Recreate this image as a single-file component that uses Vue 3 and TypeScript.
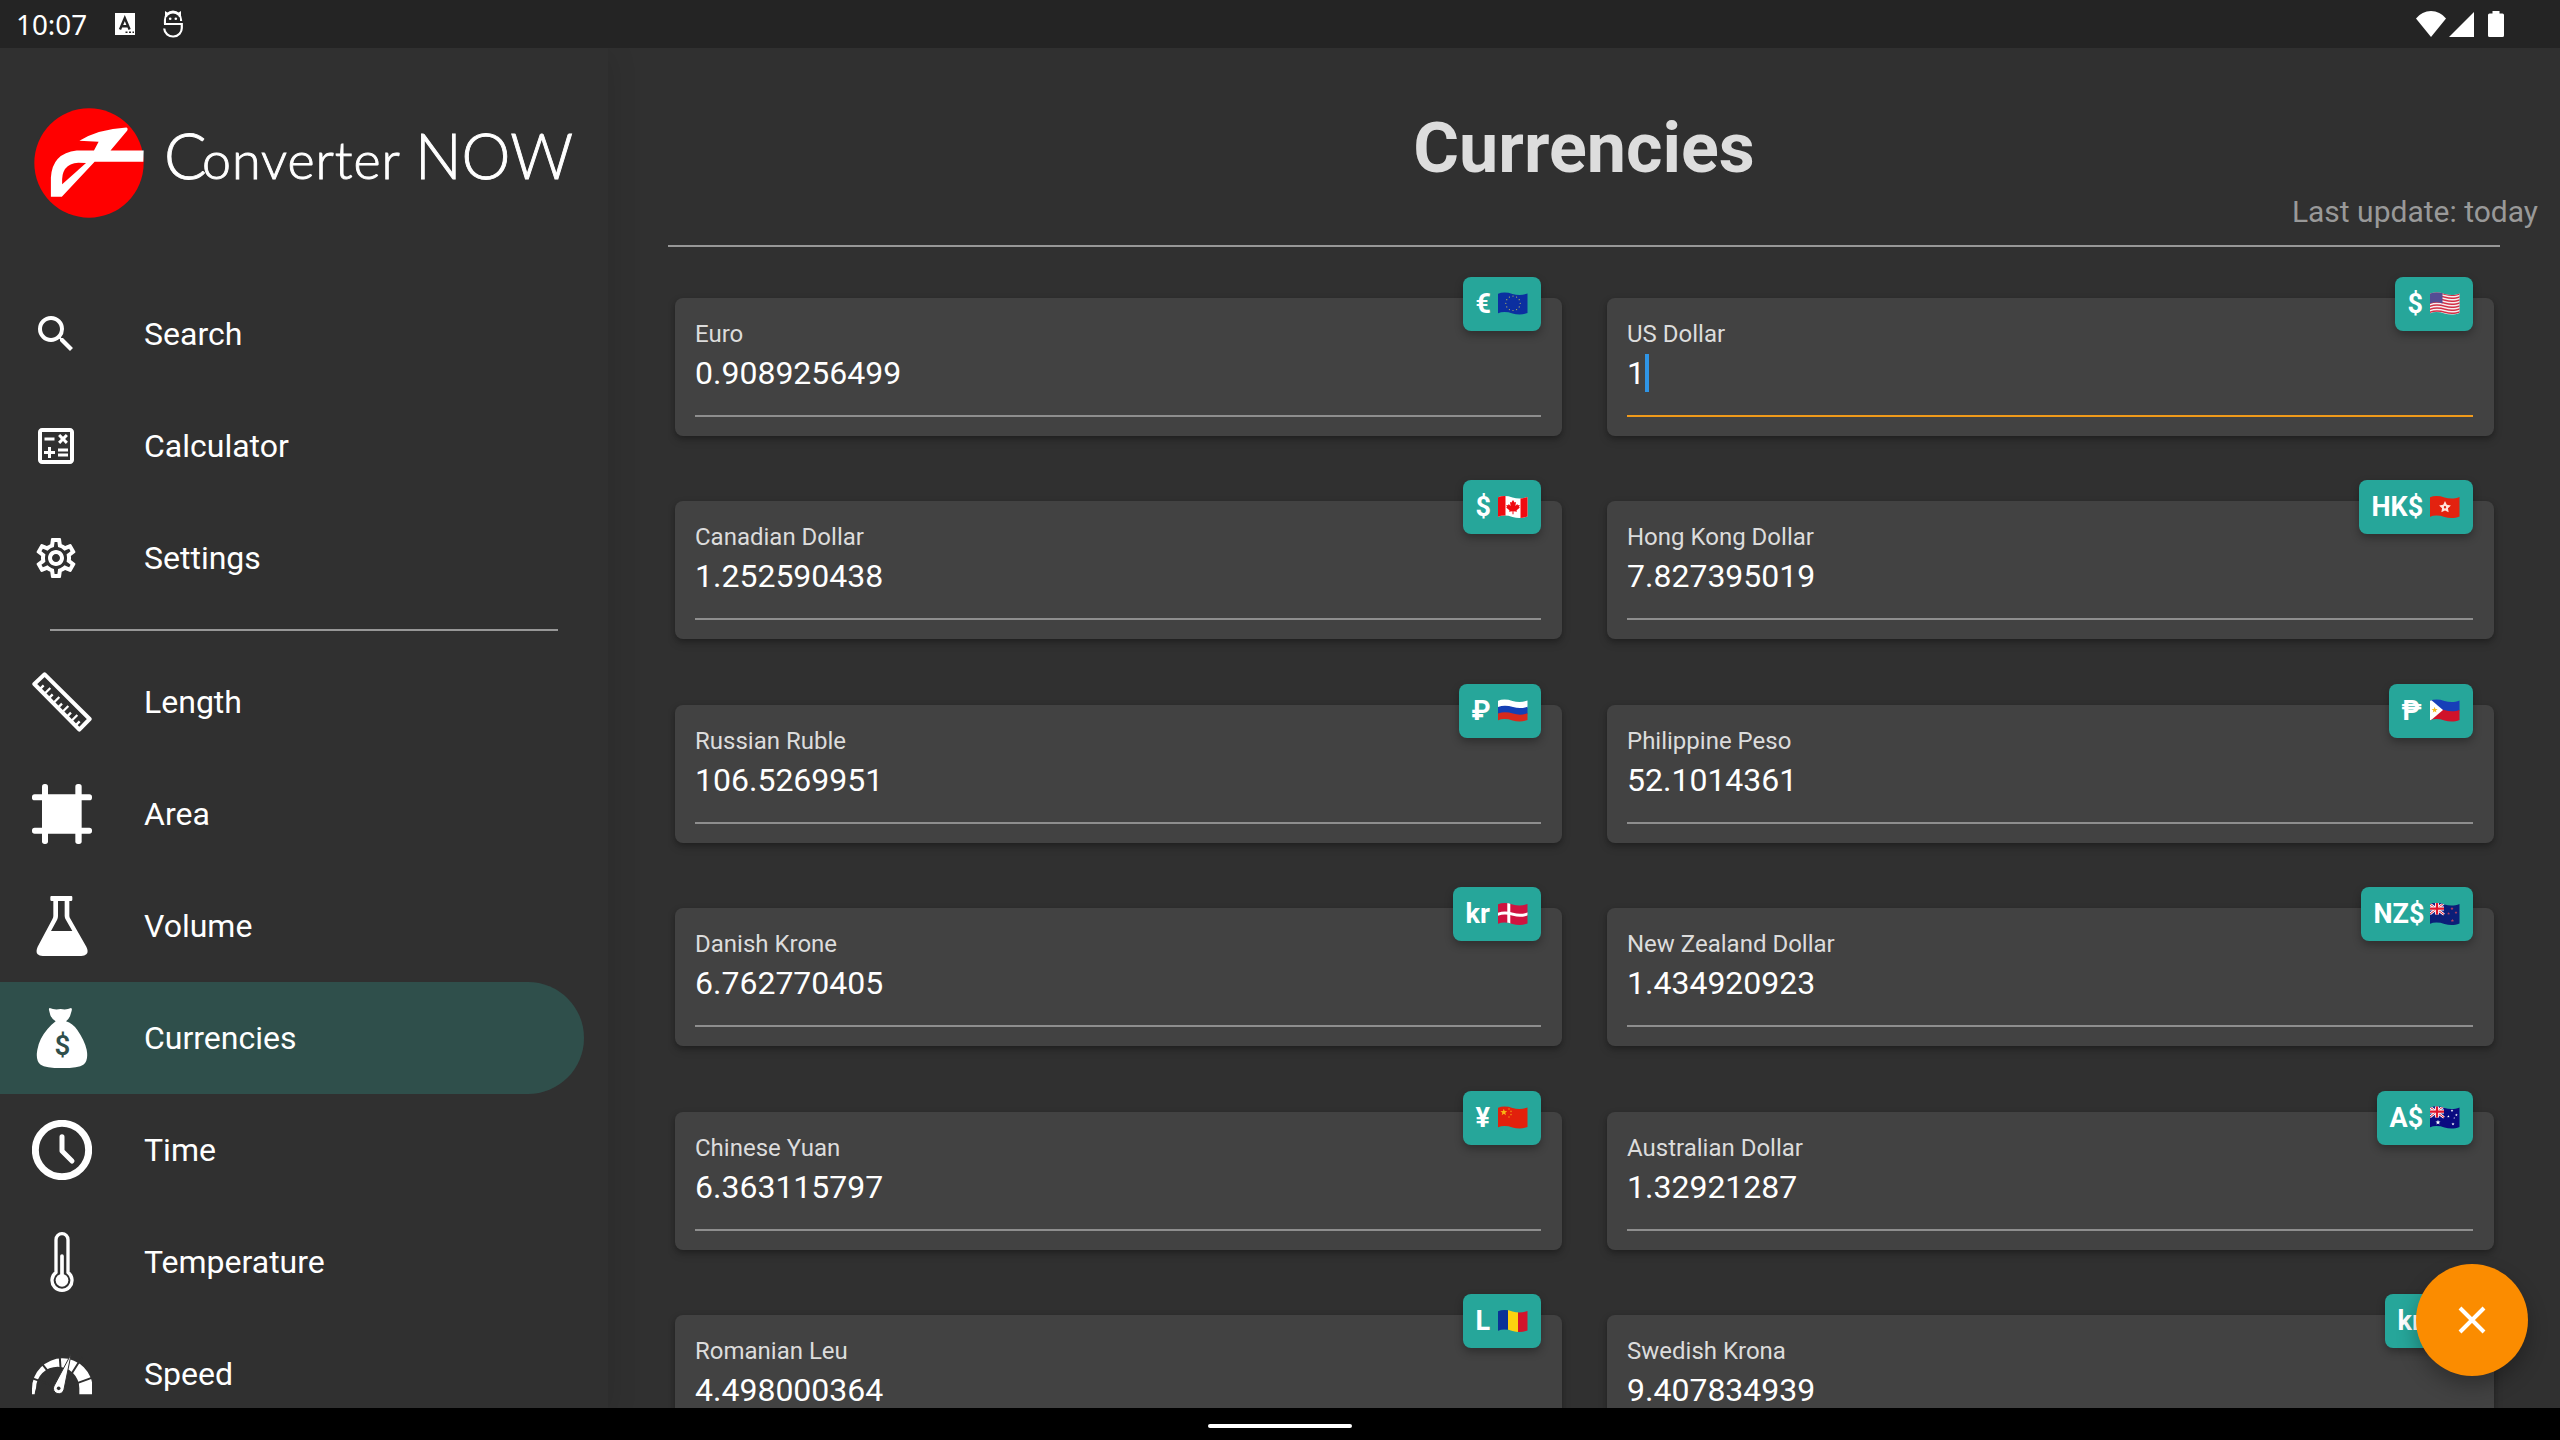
<script setup lang="ts">
type Shape = { d: string; fill?: string; stroke?: string; w?: number }

interface Currency {
  name: string
  value: string
  symbol: string
  flag: string
  tagWidth: number
  focused?: boolean
}

interface NavItem {
  label: string
  icon: string
  box: string
  selected?: boolean
}

// Horizontal strip of a waving flag between two heights.
const band = (a: number, b: number): string =>
  `M0 ${a}C5 ${a - 2} 10 ${a - 1.5} 15 ${a}C20 ${a + 1.5} 25 ${a + 1.5} 30 ${a - 0.5}V${b - 0.5}` +
  `C25 ${b + 1.5} 20 ${b + 1.5} 15 ${b}C10 ${b - 1.5} 5 ${b - 2} 0 ${b}Z`

const star = (cx: number, cy: number, r: number, inner = 0.42): string => {
  let d = ''
  for (let i = 0; i < 10; i++) {
    const q = i % 2 ? r * inner : r
    const t = -Math.PI / 2 + (i * Math.PI) / 5
    d += `${i ? 'L' : 'M'}${(cx + q * Math.cos(t)).toFixed(2)} ${(cy + q * Math.sin(t)).toFixed(2)}`
  }
  return d + 'Z'
}

const dot = (cx: number, cy: number, r: number): string =>
  `M${cx - r} ${cy}a${r} ${r} 0 1 0 ${2 * r} 0a${r} ${r} 0 1 0 ${-2 * r} 0`

const ring = (): string => {
  let d = ''
  for (let i = 0; i < 12; i++) {
    const t = (i * Math.PI) / 6
    d += dot(15 + 7.2 * Math.cos(t), 11.3 + 7.2 * Math.sin(t), 0.6)
  }
  return d
}

const unionJack: Shape[] = [
  { d: 'M0 0H14V11.5H0Z', fill: '#1b1f8a' },
  { d: 'M0 1L14 11.5M14 0L0 11', stroke: '#fff', w: 2.6 },
  { d: 'M0 1L14 11.5M14 0L0 11', stroke: '#e0142c', w: 1 },
  { d: 'M7 0V11.5M0 5.6H14', stroke: '#fff', w: 4 },
  { d: 'M7 0V11.5M0 5.6H14', stroke: '#e0142c', w: 2.3 },
]

const usStripes: Shape[] = [0, 1, 2, 3, 4, 5, 6].map((i) => ({
  d: band(1.5 + i * 3, 3 + i * 3),
  fill: '#d32f45',
}))

const flags: Record<string, Shape[]> = {
  eu: [
    { d: band(-1, 24), fill: '#0b2fa0' },
    { d: ring(), fill: '#b9b45c' },
  ],
  us: [
    { d: band(-1, 24), fill: '#f6eef0' },
    ...usStripes,
    { d: 'M0 0H12.5V11.5Q6 9 0 11.5Z', fill: '#544d94' },
  ],
  ca: [
    { d: band(-1, 24), fill: '#fff' },
    { d: 'M0 0H7.5V24H0ZM22.5 0H30V24H22.5Z', fill: '#f00a10' },
    {
      d: 'M15 4l1.6 2.6 1.4-.7-.6 4 1.9-1.9.5 1.2 2-.3-.8 2.1.9.6-3.3 2.7.3 1.4-3.4-.5v3h-1v-3l-3.4.5.3-1.4-3.3-2.7.9-.6-.8-2.1 2 .3.5-1.2 1.9 1.9-.6-4 1.4.7Z',
      fill: '#f00a10',
    },
  ],
  hk: [
    { d: band(-1, 24), fill: '#e3220f' },
    { d: star(15, 11.3, 6.2, 0.5), fill: '#ffe2dc' },
    { d: dot(15, 11.3, 1.2), fill: '#e3220f' },
  ],
  ru: [
    { d: band(-1, 9), fill: '#fff' },
    { d: band(8, 15.5), fill: '#1540b5' },
    { d: band(14.6, 24), fill: '#d8291c' },
  ],
  ph: [
    { d: band(-1, 12), fill: '#173fb8' },
    { d: band(11.3, 24), fill: '#d0122a' },
    { d: 'M0 0L13 11L0 22Z', fill: '#fff' },
    { d: star(4.6, 11, 3.2), fill: '#f5b921' },
  ],
  dk: [
    { d: band(-1, 24), fill: '#cf1340' },
    { d: band(9.8, 12.8), fill: '#fff' },
    { d: 'M9.3 0H12.3V24H9.3Z', fill: '#fff' },
  ],
  nz: [
    { d: band(-1, 24), fill: '#0b1f78' },
    ...unionJack,
    {
      d: star(22, 5.5, 1.7) + star(26, 9.5, 1.5) + star(18.6, 10.6, 1.5) + star(22.4, 17.5, 1.8),
      fill: '#b8405f',
    },
  ],
  cn: [
    { d: band(-1, 24), fill: '#e2200c' },
    { d: star(5.8, 6.3, 3.6), fill: '#f9b614' },
    { d: dot(11, 3, 0.8) + dot(13, 5.4, 0.8) + dot(13, 8.6, 0.8) + dot(11, 11, 0.8), fill: '#f08a12' },
  ],
  au: [
    { d: band(-1, 24), fill: '#0a0a80' },
    ...unionJack,
    {
      d:
        star(8, 16.3, 2.6) + star(22, 4.6, 1.4) + star(26.4, 9, 1.4) + star(18.4, 10.4, 1.4) +
        star(23, 18, 1.6) + star(24.2, 12, 0.9),
      fill: '#fff',
    },
  ],
  ro: [
    { d: 'M0 0H10V24H0Z', fill: '#0a3296' },
    { d: 'M10 0H20V24H10Z', fill: '#fcd30f' },
    { d: 'M20 0H30V24H20Z', fill: '#d3142b' },
  ],
  se: [
    { d: band(-1, 24), fill: '#0b5aa8' },
    { d: band(9.8, 12.8), fill: '#fccb05' },
    { d: 'M9.3 0H12.3V24H9.3Z', fill: '#fccb05' },
  ],
}

const currencies: Currency[] = [
  { name: 'Euro', value: '0.9089256499', symbol: '€', flag: 'eu', tagWidth: 78 },
  { name: 'US Dollar', value: '1', symbol: '$', flag: 'us', tagWidth: 78, focused: true },
  { name: 'Canadian Dollar', value: '1.252590438', symbol: '$', flag: 'ca', tagWidth: 78 },
  { name: 'Hong Kong Dollar', value: '7.827395019', symbol: 'HK$', flag: 'hk', tagWidth: 114 },
  { name: 'Russian Ruble', value: '106.5269951', symbol: '₽', flag: 'ru', tagWidth: 82 },
  { name: 'Philippine Peso', value: '52.1014361', symbol: '₱', flag: 'ph', tagWidth: 84 },
  { name: 'Danish Krone', value: '6.762770405', symbol: 'kr', flag: 'dk', tagWidth: 88 },
  { name: 'New Zealand Dollar', value: '1.434920923', symbol: 'NZ$', flag: 'nz', tagWidth: 112 },
  { name: 'Chinese Yuan', value: '6.363115797', symbol: '¥', flag: 'cn', tagWidth: 78 },
  { name: 'Australian Dollar', value: '1.32921287', symbol: 'A$', flag: 'au', tagWidth: 96 },
  { name: 'Romanian Leu', value: '4.498000364', symbol: 'L', flag: 'ro', tagWidth: 78 },
  { name: 'Swedish Krona', value: '9.407834939', symbol: 'kr', flag: 'se', tagWidth: 88 },
]

const m = '0 0 24 24'
const actions: NavItem[] = [
  {
    label: 'Search',
    box: m,
    icon: '<path d="M15.5 14h-.79l-.28-.27A6.471 6.471 0 0 0 16 9.5 6.5 6.5 0 1 0 9.5 16c1.61 0 3.09-.59 4.23-1.57l.27.28v.79l5 4.99L20.49 19l-4.99-5zm-6 0C7.01 14 5 11.99 5 9.5S7.01 5 9.5 5 14 7.01 14 9.5 11.99 14 9.5 14z"/>',
  },
  {
    label: 'Calculator',
    box: m,
    icon: '<path d="M19 3H5c-1.1 0-2 .9-2 2v14c0 1.1.9 2 2 2h14c1.1 0 2-.9 2-2V5c0-1.1-.9-2-2-2zm0 16H5V5h14v14z"/><path d="M6.25 7.72h5v1.5h-5zM13 15.75h5v1.5h-5zM13 13.25h5v1.5h-5zM8 18h1.5v-2h2v-1.5h-2v-2H8v2H6V16h2zM14.09 10.95l1.41-1.41 1.41 1.41 1.06-1.06-1.41-1.42 1.41-1.41L16.91 6 15.5 7.41 14.09 6l-1.06 1.06 1.41 1.41-1.41 1.42z"/>',
  },
  {
    label: 'Settings',
    box: m,
    icon: '<path d="M19.43 12.98c.04-.32.07-.64.07-.98 0-.34-.03-.66-.07-.98l2.11-1.65c.19-.15.24-.42.12-.64l-2-3.46c-.09-.16-.26-.25-.44-.25-.06 0-.12.01-.17.03l-2.49 1c-.52-.4-1.08-.73-1.69-.98l-.38-2.65C14.46 2.18 14.25 2 14 2h-4c-.25 0-.46.18-.49.42l-.38 2.65c-.61.25-1.17.59-1.69.98l-2.49-1c-.06-.02-.12-.03-.18-.03-.17 0-.34.09-.43.25l-2 3.46c-.13.22-.07.49.12.64l2.11 1.65c-.04.32-.07.65-.07.98 0 .33.03.66.07.98l-2.11 1.65c-.19.15-.24.42-.12.64l2 3.46c.09.16.26.25.44.25.06 0 .12-.01.17-.03l2.49-1c.52.4 1.08.73 1.69.98l.38 2.65c.03.24.24.42.49.42h4c.25 0 .46-.18.49-.42l.38-2.65c.61-.25 1.17-.59 1.69-.98l2.49 1c.06.02.12.03.18.03.17 0 .34-.09.43-.25l2-3.46c.12-.22.07-.49-.12-.64l-2.11-1.65zm-1.98-1.71c.04.31.05.52.05.73 0 .21-.02.43-.05.73l-.14 1.13.89.7 1.08.84-.7 1.21-1.27-.51-1.04-.42-.9.68c-.43.32-.84.56-1.25.73l-1.06.43-.16 1.13-.2 1.35h-1.4l-.19-1.35-.16-1.13-1.06-.43c-.43-.18-.83-.41-1.23-.71l-.91-.7-1.06.43-1.27.51-.7-1.21 1.08-.84.89-.7-.14-1.13c-.03-.31-.05-.54-.05-.74s.02-.43.05-.73l.14-1.13-.89-.7-1.08-.84.7-1.21 1.27.51 1.04.42.9-.68c.43-.32.84-.56 1.25-.73l1.06-.43.16-1.13.2-1.35h1.39l.19 1.35.16 1.13 1.06.43c.43.18.83.41 1.23.71l.91.7 1.06-.43 1.27-.51.7 1.21-1.07.85-.89.7.14 1.13zM12 8c-2.21 0-4 1.79-4 4s1.79 4 4 4 4-1.79 4-4-1.79-4-4-4zm0 6c-1.1 0-2-.9-2-2s.9-2 2-2 2 .9 2 2-.9 2-2 2z"/>',
  },
]

const u = '0 0 180 180'
const units: NavItem[] = [
  {
    label: 'Length',
    box: u,
    icon: '<path d="M7 36L38 7L173 141L142 173Z" fill="none" stroke="currentColor" stroke-width="12" stroke-linejoin="round"/><path d="M23 52l12-12M37 66l18-18M50 79l12-12M64 93l18-18M78 107l12-12M91 120l18-18M105 134l12-12M118 147l18-18M131 160l12-12" fill="none" stroke="currentColor" stroke-width="7"/>',
  },
  {
    label: 'Area',
    box: u,
    icon: '<rect x="30" y="0" width="18" height="180" rx="8"/><rect x="130" y="0" width="19" height="180" rx="8"/><rect x="0" y="31" width="180" height="18" rx="8"/><rect x="0" y="131" width="180" height="18" rx="8"/><rect x="34" y="34" width="112" height="112"/>',
  },
  {
    label: 'Volume',
    box: u,
    icon: '<path fill-rule="evenodd" d="M58 0H118Q121 0 121 4V11Q121 15 117 15H112V60Q112 64 116 70L163 152Q171 168 163 175Q158 180 148 180H32Q22 180 17 175Q10 168 17 152L61 70Q64 64 64 60V15H59Q55 15 55 11V4Q55 0 58 0ZM78 15V60Q78 66 75 72L57 105H121L102 72Q98 66 98 60V15Z"/>',
  },
  {
    label: 'Currencies',
    box: u,
    selected: true,
    icon: '<path d="M53 0Q68 7 86 3Q103 7 117 0Q121 1 119 8L114 25Q110 34 102 40Q122 46 136 66Q158 98 164 125Q170 158 154 170Q140 180 90 180Q40 180 26 170Q10 158 16 125Q22 92 46 64Q60 48 71 40Q60 33 55 22L51 6Q50 1 53 0Z"/><text x="91" y="141" text-anchor="middle" font-family="Roboto, sans-serif" font-size="83" font-weight="600" fill="#2f4f4b">$</text>',
  },
  {
    label: 'Time',
    box: u,
    icon: '<circle cx="90" cy="90" r="80" fill="none" stroke="currentColor" stroke-width="21"/><path d="M90 50V93L120 123" fill="none" stroke="currentColor" stroke-width="15" stroke-linecap="round" stroke-linejoin="round"/>',
  },
  {
    label: 'Temperature',
    box: u,
    icon: '<path d="M72 121V23a18 18 0 0 1 36 0V121a30 30 0 1 1-36 0Z" fill="none" stroke="currentColor" stroke-width="10"/><path d="M90 72V140" stroke="currentColor" stroke-width="11" stroke-linecap="round"/><circle cx="90" cy="145" r="19"/>',
  },
  {
    label: 'Speed',
    box: u,
    icon: '<path fill-rule="evenodd" d="M0 151V134A91 91 0 0 1 182 134V151H142V133A65 65 0 0 0 12 133Q9 140 8 151Z"/><path d="M90 134L-8 100M90 134L24 52M90 134L82 20M90 134L150 40M90 134L195 96" stroke="#303030" stroke-width="6"/><path d="M117.500 30L96 136A16 16 0 1 1 66 126Z" stroke="#303030" stroke-width="3"/><circle cx="80" cy="133" r="5.500" fill="#303030"/>',
  },
]
</script>

<template>
  <div class="screen">
    <header class="status">
      <span class="clock">10:07</span>
      <svg class="st-a" viewBox="0 0 20 22"><path d="M0 0H20V22H0Z" fill="#fff" /><path d="M5 16.500L9.800 5L14.600 16.500M6.500 13.200H13" fill="none" stroke="#242424" stroke-width="2.400" /><path d="M10.500 19.300h2M14 19.300h2M17.500 19.300h1.500" stroke="#242424" stroke-width="1.500" /></svg>
      <svg class="st-s" viewBox="0 0 20 29"><path d="M2 8V2L5.500 4.200Q10 1.500 14.500 4.200L18 2V8" fill="#fff" /><path d="M2 15V11A8 8.500 0 0 1 18 11V12M1 15H18.800V18.500A8.800 8.500 0 0 1 1.200 19.500" fill="none" stroke="#fff" stroke-width="2.200" /><path d="M3 14V11A7 6.500 0 0 1 17 11V14Z" fill="#242424" /><circle cx="7.200" cy="9.800" r="1.300" fill="#fff" /><circle cx="12.800" cy="9.800" r="1.300" fill="#fff" /></svg>
      <span class="grow" />
      <svg class="st-wifi" viewBox="0 0 30 26"><path d="M0 7.500Q6 0 15 0T30 7.500L15 26Z" fill="#fff" /></svg>
      <svg class="st-cell" viewBox="0 0 25 25"><path d="M0 25L25 0V25Z" fill="#fff" /></svg>
      <svg class="st-bat" viewBox="0 0 16 26"><path d="M4.500 0H11.500V2.500H14.500Q16 2.500 16 4V24.500Q16 26 14.500 26H1.500Q0 26 0 24.500V4Q0 2.500 1.500 2.500H4.500Z" fill="#fff" /></svg>
    </header>

    <div class="body">
      <aside class="drawer">
        <div class="brand">
          <svg class="logo" viewBox="72 322 330 332">
            <circle cx="237" cy="488" r="165" fill="#f00" />
            <path d="M208 421Q265 386 350 381Q356 384 352 391L302 450H402L401 484H254L155 590H122V532Q126 458 200 450H252L266 424Z" fill="#fff" />
            <path d="M228 488L156 552Q151 490 205 487Z" fill="#f00" />
          </svg>
          <svg class="wordmark" viewBox="0 0 420 80">
            <text y="59"><tspan class="cap" x="0" textLength="38">C</tspan><tspan class="low" x="38" textLength="198">onverter</tspan><tspan class="cap" x="251" textLength="158" lengthAdjust="spacingAndGlyphs">NOW</tspan></text>
          </svg>
        </div>
        <nav>
          <div v-for="a in actions" :key="a.label" class="item">
            <span class="slot"><svg class="ic small" :viewBox="a.box" v-html="a.icon" /></span>
            <span>{{ a.label }}</span>
          </div>
          <div class="rule" />
          <div v-for="n in units" :key="n.label" class="item" :class="{ selected: n.selected }">
            <span class="slot"><svg class="ic" :viewBox="n.box" v-html="n.icon" /></span>
            <span>{{ n.label }}</span>
          </div>
        </nav>
      </aside>

      <main>
        <h1>Currencies</h1>
        <p class="update">Last update: today</p>
        <div class="line" />
        <section class="grid">
          <article v-for="c in currencies" :key="c.name" class="card" :class="{ focused: c.focused }">
            <div class="label">{{ c.name }}</div>
            <div class="value">{{ c.value }}<i v-if="c.focused" class="caret" /></div>
            <div class="tag" :style="{ width: c.tagWidth + 'px' }">
              <span>{{ c.symbol }}</span>
              <svg class="flag" viewBox="0 0 30 23">
                <path
                  v-for="(s, i) in flags[c.flag]"
                  :key="i"
                  :d="s.d"
                  :fill="s.fill ?? 'none'"
                  :stroke="s.stroke"
                  :stroke-width="s.w"
                />
              </svg>
            </div>
          </article>
        </section>
      </main>
    </div>

    <button class="fab" aria-label="Clear">
      <svg viewBox="0 0 28 28"><path d="M2 2L26 26M26 2L2 26" stroke="#fff" stroke-width="4" /></svg>
    </button>

    <footer><span class="handle" /></footer>
  </div>
</template>

<style>
body {
  margin: 0;
  background: #303030;
}
</style>

<style scoped>
.screen {
  position: relative;
  display: flex;
  flex-direction: column;
  width: 2560px;
  height: 1440px;
  overflow: hidden;
  background: #303030;
  color: #fff;
  font-family: Roboto, sans-serif;
}
.status {
  display: flex;
  align-items: flex-start;
  flex: none;
  height: 48px;
  background: #242424;
  position: relative;
  z-index: 2;
}
.clock {
  width: 99px;
  padding-left: 16px;
  font: 27.8px/49px "Noto Sans", sans-serif;
}
.st-a { width: 20px; height: 22px; margin-top: 13px; }
.st-s { width: 20px; height: 29px; margin: 9px 0 0 28px; }
.grow { flex: 1; }
.st-wifi { width: 30px; height: 26px; margin-top: 11px; }
.st-cell { width: 25px; height: 25px; margin: 12px 14px 0 3px; }
.st-bat { width: 16px; height: 26px; margin: 11px 56px 0 0; }
.body {
  display: flex;
  flex: 1;
  min-height: 0;
}
.drawer {
  flex: none;
  width: 608px;
  background: #303030;
  box-shadow: 0 6px 28px rgba(0, 0, 0, 0.13);
}
.brand {
  display: flex;
  align-items: flex-start;
  height: 170px;
  padding: 60px 0 0 34px;
}
.logo { flex: none; width: 110px; height: 110px; }
.wordmark {
  width: 420px;
  height: 80px;
  margin: 12px 0 0 20px;
  overflow: visible;
  fill: #fff;
  stroke: #fff;
  stroke-width: 0.9px;
  font-family: Lato, sans-serif;
  font-weight: 300;
}
.cap { font-size: 63px; }
.low { font-size: 52px; }
.item {
  display: flex;
  align-items: center;
  width: 584px;
  height: 112px;
  font-size: 32px;
  line-height: 38px;
}
.item.selected {
  background: #2f4f4b;
  border-radius: 0 56px 56px 0;
}
.slot {
  display: flex;
  flex: none;
  width: 112px;
  padding-left: 32px;
}
.ic { width: 60px; height: 60px; fill: currentColor; }
.ic.small { width: 48px; height: 48px; }
.rule {
  width: 508px;
  height: 2px;
  margin: 15px 50px;
  background: #979797;
}
main {
  flex: 1;
  min-width: 0;
  overflow: hidden;
  margin-left: 60px;
  padding-right: 60px;
}
h1 {
  margin: 59px 0 0;
  color: #ddd;
  font-size: 70px;
  font-weight: 700;
  line-height: 82px;
  text-align: center;
}
.update {
  margin: 4px -38px 0 0;
  color: #999;
  font-size: 30px;
  line-height: 38px;
  text-align: right;
}
.line {
  height: 2px;
  margin-top: 14px;
  background: #979797;
}
.grid {
  display: grid;
  grid-template-columns: 1fr 1fr;
  grid-auto-rows: 138px;
  gap: 65.5px 45px;
  padding: 50.9px 6.5px 0;
}
.card {
  position: relative;
  box-sizing: border-box;
  padding: 22px 20.5px 0;
  border-radius: 8px;
  background: #424242;
  box-shadow: 0 4px 8px rgba(0, 0, 0, 0.22), 0 2px 4px rgba(0, 0, 0, 0.15);
}
.label {
  color: #dcdcdc;
  font-size: 24px;
  line-height: 28px;
}
.value {
  display: flex;
  height: 61px;
  margin-top: 6px;
  border-bottom: 2px solid #8e8e8e;
  font-size: 32px;
  line-height: 38px;
}
.focused .value { border-color: #f09a1a; }
.caret {
  width: 4px;
  height: 38px;
  background: #2f95e6;
}
.tag {
  position: absolute;
  top: -21px;
  right: 20.5px;
  display: flex;
  align-items: center;
  justify-content: space-between;
  box-sizing: border-box;
  height: 54px;
  padding: 0 13.5px 0 12.5px;
  border-radius: 8px;
  background: #26a69a;
  box-shadow: 0 4px 8px rgba(0, 0, 0, 0.3);
  font-size: 27px;
  font-weight: 700;
  line-height: 54px;
}
.flag {
  flex: none;
  width: 30px;
  height: 23px;
  clip-path: path("M0 1.500C5 -.5 10 0 15 1.500C20 3 25 3 30 1V20.500C25 22.500 20 22.500 15 21C10 19.500 5 19 0 21Z");
}
.fab {
  position: absolute;
  left: 2416px;
  top: 1264px;
  display: flex;
  align-items: center;
  justify-content: center;
  width: 112px;
  height: 112px;
  padding: 0;
  border: 0;
  border-radius: 50%;
  background: #fb8c00;
  box-shadow: 0 10px 20px rgba(0, 0, 0, 0.28);
}
.fab svg { width: 28px; height: 28px; }
footer {
  position: relative;
  display: flex;
  flex: none;
  justify-content: center;
  height: 32px;
  background: #000;
}
.handle {
  width: 144px;
  height: 4px;
  margin-top: 16px;
  border-radius: 2px;
  background: #fff;
}
</style>
